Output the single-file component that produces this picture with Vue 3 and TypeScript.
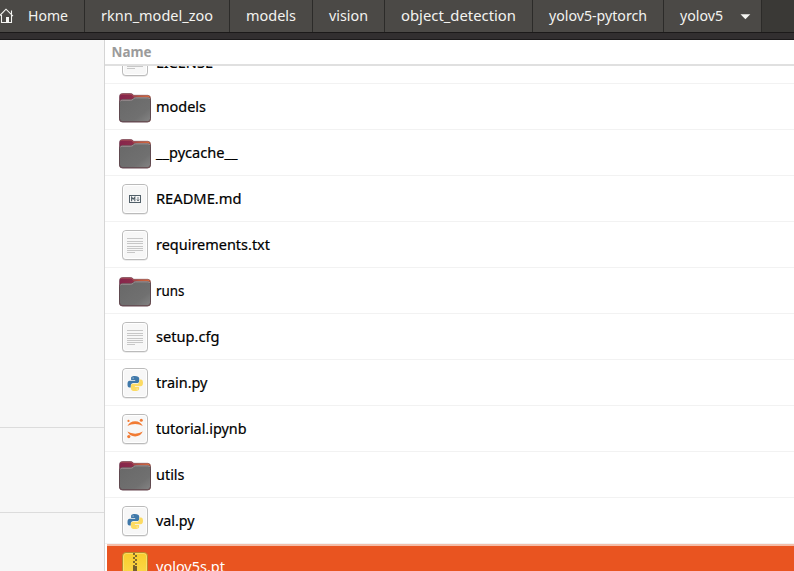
<script setup lang="ts">
type Kind = 'folder' | 'text' | 'markdown' | 'python' | 'jupyter' | 'archive'
interface Entry { name: string; kind: Kind; width: number; baseline?: number; selected?: boolean }
interface Crumb { name: string; size: number; width: number; home?: boolean; menu?: boolean }

const crumbs: Crumb[] = [
  { name: 'Home', size: 85, width: 40, home: true },
  { name: 'rknn_model_zoo', size: 145, width: 112 },
  { name: 'models', size: 83, width: 50 },
  { name: 'vision', size: 72, width: 39 },
  { name: 'object_detection', size: 148, width: 115 },
  { name: 'yolov5-pytorch', size: 131, width: 98 },
  { name: 'yolov5', size: 98, width: 43, menu: true },
]
const entries: Entry[] = [
  { name: 'LICENSE', kind: 'text', width: 57, baseline: 29.5 },
  { name: 'models', kind: 'folder', width: 50 },
  { name: '__pycache__', kind: 'folder', width: 81.5 },
  { name: 'README.md', kind: 'markdown', width: 85.5 },
  { name: 'requirements.txt', kind: 'text', width: 114 },
  { name: 'runs', kind: 'folder', width: 28.5 },
  { name: 'setup.cfg', kind: 'text', width: 63.5 },
  { name: 'train.py', kind: 'python', width: 51.5 },
  { name: 'tutorial.ipynb', kind: 'jupyter', width: 90.5 },
  { name: 'utils', kind: 'folder', width: 28.5 },
  { name: 'val.py', kind: 'python', width: 38.5 },
  { name: 'yolov5s.pt', kind: 'archive', width: 69, selected: true },
]
</script>

<template>
  <div class="window">
    <svg class="defs" width="0" height="0" aria-hidden="true">
      <defs>
        <linearGradient id="folder-back" x1="0" x2="1" y1="0" y2="0">
          <stop offset="0" stop-color="#86254c" /><stop offset=".4" stop-color="#8b2c4a" />
          <stop offset=".65" stop-color="#c65133" /><stop offset="1" stop-color="#e66b31" />
        </linearGradient>
        <linearGradient id="folder-front" x1="0" x2="1" y1="0" y2="1">
          <stop offset="0" stop-color="#686868" /><stop offset=".7" stop-color="#707070" /><stop offset="1" stop-color="#848484" />
        </linearGradient>
        <linearGradient id="zip-body" x1="0" x2="0" y1="0" y2="1">
          <stop offset="0" stop-color="#f9cc2b" /><stop offset="1" stop-color="#fcdb53" />
        </linearGradient>
      </defs>
    </svg>

    <header class="pathbar">
      <div v-for="c in crumbs" :key="c.name" class="crumb" :class="{ home: c.home }" :style="{ width: c.size + 'px' }">
        <svg v-if="c.home" class="house" width="15" height="16" viewBox="0 0 15 16">
          <path d="M-.6 8 6 1.2l7 7M1.5 7v7.5h10V7M11.5 6V2.5" fill="none" stroke="#f5f5f2" stroke-width="1.1" />
          <path d="M6 9h3v6H6z" fill="#f5f5f2" />
        </svg>
        <svg class="label" :width="c.width" height="32">
          <text x="0" y="21" :textLength="c.width" lengthAdjust="spacingAndGlyphs">{{ c.name }}</text>
        </svg>
        <svg v-if="c.menu" class="caret" width="11" height="6" viewBox="0 0 11 6"><path d="M.5.3h9.8L5.4 5.3z" fill="#f5f5f2" /></svg>
      </div>
    </header>
    <div class="strip" />

    <main class="body">
      <aside class="sidebar">
        <div class="places" /><div class="mounts" /><div class="other" />
      </aside>
      <section class="files">
        <div class="columns">
          <svg class="label" width="41" height="24"><text x=".5" y="17" textLength="40" lengthAdjust="spacingAndGlyphs">Name</text></svg>
        </div>
        <div class="viewport">
          <div class="rows">
            <div v-for="e in entries" :key="e.name" class="row" :class="{ selected: e.selected }">
              <svg class="icon" width="32" height="45" viewBox="0 0 32 45">
                <g v-if="e.kind === 'folder'">
                  <path d="M.5 12.5q0-3 3-3h8.2q1.2 0 2 .8l1 1h14q2.8 0 2.8 2.8v21q0 3-3 3h-25q-3 0-3-3z" fill="url(#folder-back)" stroke="#633947" stroke-opacity=".6" />
                  <path d="M1.3 10.9q.7-.7 2-.7h8q1.2 0 2 .8l1.2 1h13.8q1.6 0 2.2 1" fill="none" stroke="#d6806c" stroke-opacity=".5" stroke-width=".8" />
                  <path d="M.5 18.5q0-2.7 2.7-2.7h8.3q1.3 0 2.1-.7l1-1q.8-.7 2-.7h12.1q2.8 0 2.8 2.8v18.3q0 3.2-3.2 3.2H3.7q-3.2 0-3.2-3.2z" fill="url(#folder-front)" stroke="#604a50" />
                  <path d="M1.3 17.2q.7-1 2-1h8.4q1.3 0 2.1-.7l1-1q.7-.7 1.8-.7h12q1.7 0 2.2 1.2" fill="none" stroke="#a89c9e" stroke-width=".9" />
                </g>
                <g v-else>
                  <rect x="3" y="8.8" width="26" height="29.8" rx="4" fill="#999" opacity=".35" />
                  <rect x="3.5" y="8.5" width="25" height="29" rx="3.5" :fill="e.kind === 'archive' ? 'url(#zip-body)' : '#f7f7f7'" :stroke="e.kind === 'archive' ? '#b6892a' : '#bbb'" />
                  <rect x="4.5" y="9.5" width="23" height="27" rx="2.7" fill="none" stroke="#fff" :stroke-opacity="e.kind === 'archive' ? .25 : .9" />
                  <path v-if="e.kind === 'text'" d="M8 16.5h16M8 19.5h16M8 21.5h16M8 24.5h16M8 26.5h16M8 28.5h16M8 30.5h8" stroke="#c7c7c7" stroke-width="1" />
                  <g v-else-if="e.kind === 'markdown'" fill="none" stroke="#526069">
                    <rect x="10.5" y="19.5" width="11" height="7" stroke-width="1" />
                    <path d="M12.6 25.2v-4l1.6 2 1.6-2v4" stroke-width="1.1" />
                    <path d="M19 21v4M17.8 23.5l1.2 1.4 1.2-1.4" stroke-width=".8" />
                  </g>
                  <g v-else-if="e.kind === 'python'">
                    <path d="M15.8 16c-3.4 0-3.7 1.1-3.7 2.5v1.6h4.1v.7h-5.5c-1.7 0-2.2 1.4-2.2 3.5 0 2.2.5 3.3 2 3.3h1.3v-2c0-1.5 1.1-2.5 2.6-2.5h3.6c1.4 0 2.2-.9 2.2-2.1v-2.6c0-1.5-1.5-2.4-4.4-2.4z" fill="#3f78a9" />
                    <path d="M16.2 31c3.4 0 3.9-1 3.9-2.5v-1.6h-4.2v-.7h5.7c1.7 0 2.4-1.4 2.4-3.5s-.7-3.3-2.2-3.3h-1.4v1.8c0 1.5-1.1 2.6-2.6 2.6h-3.7c-1.4 0-2.2.9-2.2 2.1v2.5c0 1.7 1.5 2.6 4.3 2.6z" fill="#fcdb63" />
                    <circle cx="14.1" cy="18" r=".55" fill="#fff" /><circle cx="18.1" cy="29" r=".55" fill="#fff" />
                  </g>
                  <g v-else-if="e.kind === 'jupyter'" fill="#f17b34">
                    <path d="M8.4 20q2.4-4.8 7.7-4.8t7.7 4.8q-3.4-2-7.7-2t-7.7 2zM8.4 25.6q3.4 2.1 7.7 2.1t7.7-2.1q-2.5 4.9-7.7 4.9t-7.7-4.9z" />
                    <circle cx="22.3" cy="14.3" r="1.5" /><circle cx="9.5" cy="14.9" r="1.1" /><circle cx="9.8" cy="30.6" r="1.6" />
                  </g>
                  <g v-else-if="e.kind === 'archive'">
                    <path d="M15 9v14M17 11v12" stroke="#826b2f" stroke-width="2" stroke-dasharray="2 2" />
                    <path d="M14 22h4v8h-4z" fill="#74602e" />
                  </g>
                </g>
              </svg>
              <svg class="label" :width="e.width" height="45">
                <text x="0" :y="e.baseline ?? 28" :textLength="e.width" lengthAdjust="spacingAndGlyphs">{{ e.name }}</text>
              </svg>
            </div>
          </div>
        </div>
      </section>
    </main>
  </div>
</template>

<style>
html, body { margin: 0; overflow: hidden; }
</style>
<style scoped>
.window { width: 794px; height: 571px; overflow: hidden; display: flex; flex-direction: column; background: #fff; font: 14.3px "Noto Sans", "Open Sans", sans-serif; }
.window * { box-sizing: border-box; }
.defs { display: block; flex: none; height: 0; }
svg { display: block; flex: none; }
.label { overflow: visible; }
.pathbar { display: flex; height: 33px; flex: none; background: #3a3936; border-bottom: 1px solid #1c1a1a; }
.crumb { display: flex; flex: none; height: 32px; padding-left: 16px; background: #4b4946; border-right: 1px solid #2c2b29; }
.crumb.home { padding-left: 0; }
.crumb text { fill: #f3f3f0; }
.house { margin: 8px 13px 0 0; }
.caret { margin: 14px 0 0 17px; }
.strip { height: 7px; flex: none; background: #322f30; border-bottom: 1px solid #1c1a1b; }
.body { display: flex; flex: 1; min-height: 0; }
.sidebar { width: 105px; flex: none; background: #f7f7f7; border-right: 1px solid #d5d5d5; }
.places { height: 388px; border-bottom: 1px solid #dcdcdc; }
.mounts { height: 85px; border-bottom: 1px solid #dcdcdc; }
.files { flex: 1; min-width: 0; display: flex; flex-direction: column; }
.columns { height: 26px; flex: none; padding-left: 6px; border-bottom: 2px solid #e0e0e0; }
.columns text { fill: #9b9b9b; font-weight: 700; font-size: 14px; }
.viewport { flex: 1; min-height: 0; overflow: hidden; }
.rows { margin-top: -28px; }
.row { height: 46px; display: flex; gap: 5px; padding-left: 14px; border-bottom: 1px solid #f2f2f2; }
.row text { fill: #000; stroke: #000; stroke-width: .2px; }
.row.selected { margin-left: 2px; padding-left: 12px; background: #e95420; border: 0; box-shadow: inset 0 2px #f5bda8; }
.row.selected text { fill: #fff; stroke: none; }
</style>
